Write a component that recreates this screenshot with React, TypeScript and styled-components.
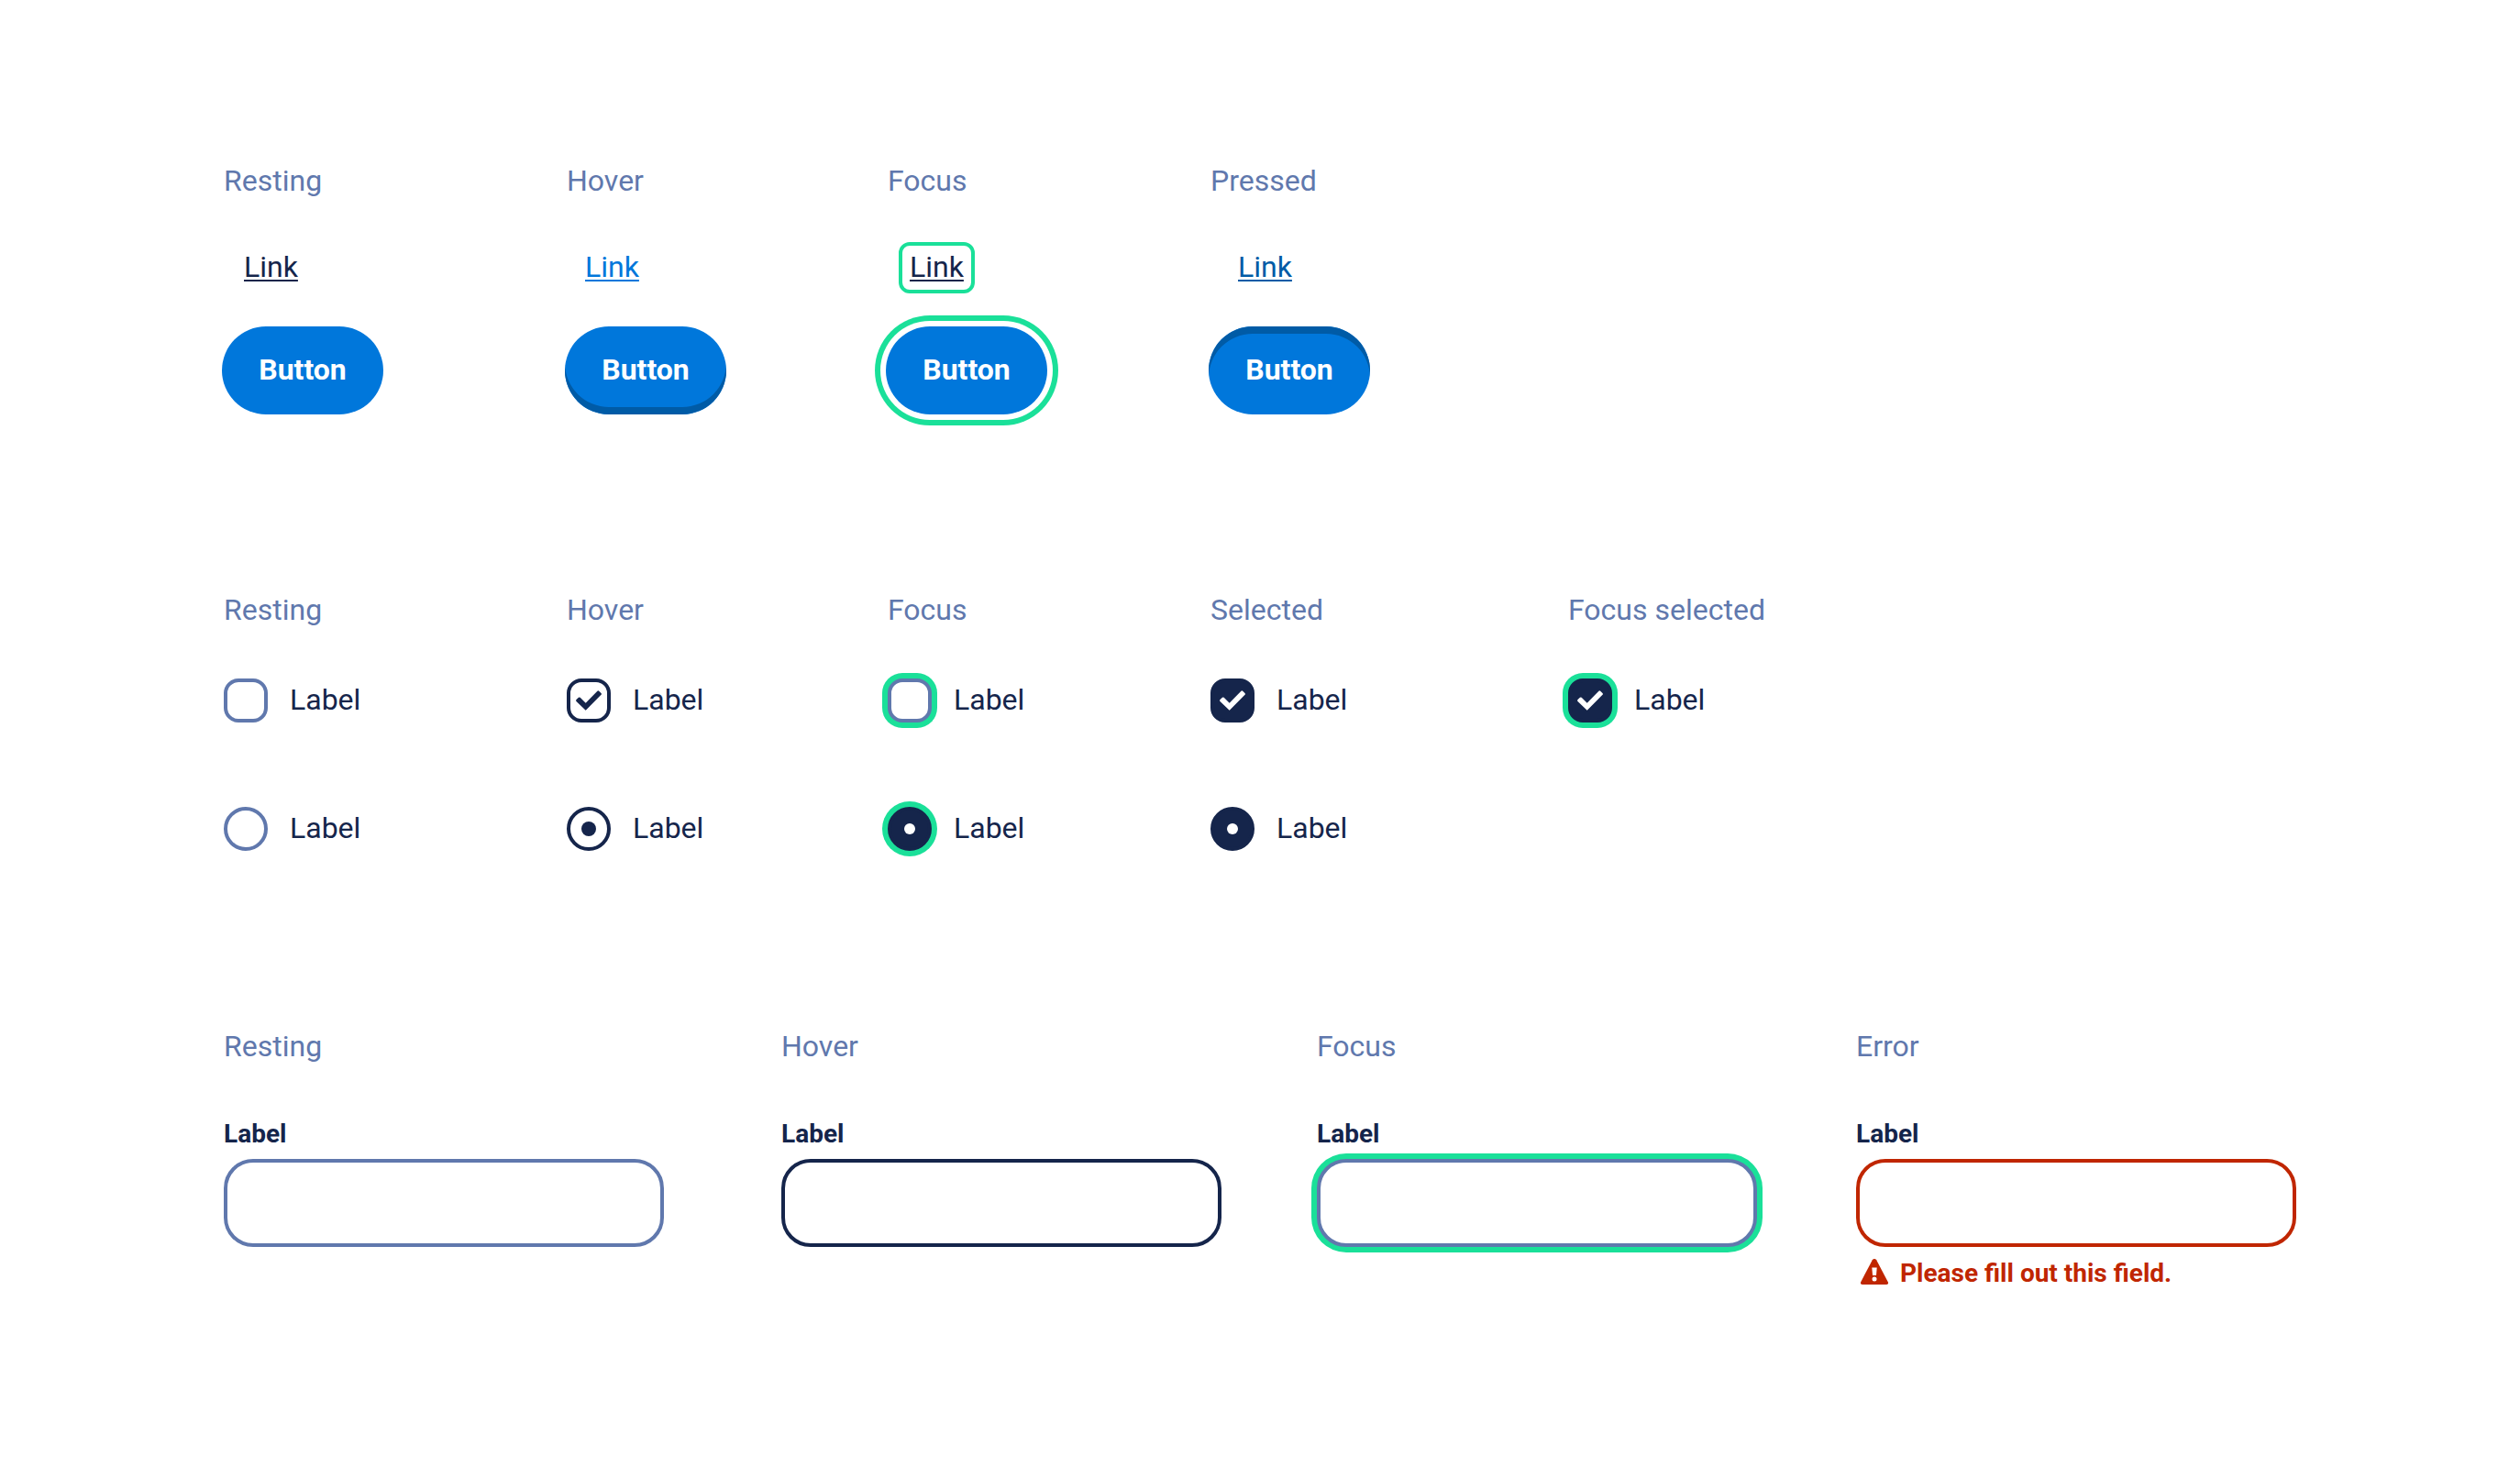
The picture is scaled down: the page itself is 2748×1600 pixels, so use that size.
import React, { useId } from "react";
import styled, { createGlobalStyle, css } from "styled-components";

const color = {
  navy: "#15254b",
  slate: "#6078ad",
  blue: "#0077db",
  deepBlue: "#005ba6",
  green: "#1ae099",
  red: "#c02600",
  white: "#ffffff",
};

type State = "resting" | "hover" | "focus" | "pressed" | "selected" | "focusSelected" | "error";

const GlobalStyle = createGlobalStyle`
  *, *::before, *::after { box-sizing: border-box; }
  body {
    margin: 0;
    background: ${color.white};
    color: ${color.navy};
    font-family: Roboto, "Liberation Sans", sans-serif;
    font-size: 32px;
    line-height: 40px;
  }
`;

const Page = styled.main`
  display: flex;
  flex-direction: column;
  padding: 176px 242px;
`;

const Group = styled.section<{ $after?: number }>`
  display: flex;
  flex-direction: column;
  margin-bottom: ${(p) => p.$after ?? 0}px;
`;

const Columns = styled.div<{ $tracks: string; $before?: number; $inset?: number }>`
  display: grid;
  grid-template-columns: ${(p) => p.$tracks};
  justify-items: start;
  align-items: start;
  margin-top: ${(p) => p.$before ?? 0}px;

  & > * {
    margin-left: ${(p) => p.$inset ?? 0}px;
  }
`;

const Heading = styled.h2`
  margin-top: 0;
  margin-bottom: 0;
  color: ${color.slate};
  font-size: 32px;
  font-weight: 400;
  line-height: 42px;
`;

const linkColor: Partial<Record<State, string>> = {
  hover: color.blue,
  pressed: color.deepBlue,
};

const TextLink = styled.a<{ $state: State }>`
  padding: 3px 8px 5px;
  border: 4px solid ${(p) => (p.$state === "focus" ? color.green : "transparent")};
  border-radius: 12px;
  color: ${(p) => linkColor[p.$state] ?? color.navy};
  text-decoration: underline;
  text-decoration-thickness: 2px;
  text-decoration-skip-ink: none;
  text-underline-offset: 3px;
`;

const buttonShadow: Partial<Record<State, string>> = {
  hover: `inset 0 -8px 0 ${color.deepBlue}`,
  focus: `0 0 0 6px ${color.white}, 0 0 0 12px ${color.green}`,
  pressed: `inset 0 8px 0 ${color.deepBlue}`,
};

const PillButton = styled.button<{ $state: State }>`
  height: 96px;
  min-width: 176px;
  padding: 0 32px 2px;
  border: 0;
  border-radius: 48px;
  background: ${color.blue};
  box-shadow: ${(p) => buttonShadow[p.$state] ?? "none"};
  color: ${color.white};
  font: 700 32px/40px Roboto, "Liberation Sans", sans-serif;
  cursor: pointer;
`;

const ChoiceLabel = styled.label`
  display: flex;
  align-items: center;
  gap: 24px;
  cursor: pointer;
`;

const ChoiceText = styled.span`
  padding-bottom: 2px;
`;

const Mark = styled.span`
  display: grid;
  width: 48px;
  height: 48px;
  & > * { grid-area: 1 / 1; }
`;

const filled = (s: State) => s === "selected" || s === "focusSelected";
const ringed = (s: State) => s === "focus" || s === "focusSelected";

const controlBase = css<{ $state: State }>`
  appearance: none;
  width: 48px;
  height: 48px;
  margin: 0;
  border: 4px solid
    ${(p) => (p.$state === "resting" || p.$state === "focus" ? color.slate : color.navy)};
  background: ${color.white};
  box-shadow: ${(p) => (ringed(p.$state) ? `0 0 0 6px ${color.green}` : "none")};
  cursor: pointer;
`;

const Checkbox = styled.input<{ $state: State }>`
  ${controlBase}
  border-radius: 16px;
  background: ${(p) => (filled(p.$state) ? color.navy : color.white)};
`;

const Radio = styled.input<{ $state: State }>`
  ${controlBase}
  display: grid;
  place-content: center;
  border-radius: 50%;

  &:checked {
    border-color: ${color.navy};
    background: ${(p) => (p.$state === "hover" ? color.white : color.navy)};
  }

  &:checked::before {
    content: "";
    width: ${(p) => (p.$state === "hover" ? 16 : 12)}px;
    height: ${(p) => (p.$state === "hover" ? 16 : 12)}px;
    border-radius: 50%;
    background: ${(p) => (p.$state === "hover" ? color.navy : color.white)};
  }
`;

const CheckSvg = styled.svg<{ $light: boolean }>`
  width: 48px;
  height: 48px;
  fill: ${(p) => (p.$light ? color.white : color.navy)};
  pointer-events: none;
`;

const Field = styled.div`
  display: flex;
  flex-direction: column;
  width: 100%;
  max-width: 480px;
`;

const FieldLabel = styled.label`
  margin-bottom: 6px;
  font-size: 28px;
  font-weight: 700;
  line-height: 42px;
`;

const fieldBorder: Partial<Record<State, string>> = {
  hover: color.navy,
  error: color.red,
};

const TextInput = styled.input<{ $state: State }>`
  width: 100%;
  height: 96px;
  padding: 0 28px;
  border: 4px solid ${(p) => fieldBorder[p.$state] ?? color.slate};
  border-radius: 32px;
  outline: 0;
  background: ${color.white};
  box-shadow: ${(p) => (p.$state === "focus" ? `0 0 0 6px ${color.green}` : "none")};
  color: ${color.navy};
  font: 400 32px/40px Roboto, "Liberation Sans", sans-serif;
`;

const ErrorMessage = styled.p`
  display: flex;
  align-items: center;
  gap: 12px;
  margin: 8px 0 0;
  padding-left: 4px;
  color: ${color.red};
  font-size: 28px;
  font-weight: 700;
  line-height: 42px;
`;

const WarningSvg = styled.svg`
  flex: none;
  width: 32px;
  height: 32px;
`;

const WarningIcon = () => (
  <WarningSvg viewBox="0 0 32 32" aria-hidden="true">
    <path
      d="M13.8 1.2 C14.8 -.4 17.2 -.4 18.2 1.2 L30.8 25.2 C31.5 26.7 30.8 28 29.2 28 H2.8 C1.2 28 .5 26.7 1.2 25.2 Z"
      fill={color.red}
    />
    <path d="M13.3 9.5 H18.7 L18 18 H14 Z" fill={color.white} />
    <circle cx="16" cy="22" r="2.5" fill={color.white} />
  </WarningSvg>
);

const CheckIcon = ({ light }: { light: boolean }) => (
  <CheckSvg viewBox="0 0 48 48" aria-hidden="true" $light={light}>
    <path d="M20.7 34.7 L10.5 24.9 Q9.7 24 10.5 23.1 L12.9 20.8 Q13.8 20 14.7 20.8 L20.7 26.7 L33.4 13.7 Q34.3 12.8 35.2 13.7 L37.5 16 Q38.4 16.9 37.5 17.8 Z" />
  </CheckSvg>
);

function CheckboxChoice({ state }: { state: State }) {
  const checked = state === "hover" || filled(state);
  return (
    <ChoiceLabel>
      <Mark>
        <Checkbox type="checkbox" $state={state} defaultChecked={checked} />
        {checked && <CheckIcon light={filled(state)} />}
      </Mark>
      <ChoiceText>Label</ChoiceText>
    </ChoiceLabel>
  );
}

function RadioChoice({ state }: { state: State }) {
  return (
    <ChoiceLabel>
      <Radio type="radio" name={`radio-${state}`} $state={state} defaultChecked={state !== "resting"} />
      <ChoiceText>Label</ChoiceText>
    </ChoiceLabel>
  );
}

function TextField({ state }: { state: State }) {
  const id = useId();
  const invalid = state === "error";
  return (
    <Field>
      <FieldLabel htmlFor={id}>Label</FieldLabel>
      <TextInput
        id={id}
        type="text"
        $state={state}
        aria-invalid={invalid}
        aria-describedby={invalid ? `${id}-error` : undefined}
      />
      {invalid && (
        <ErrorMessage id={`${id}-error`}>
          <WarningIcon />
          Please fill out this field.
        </ErrorMessage>
      )}
    </Field>
  );
}

const actionStates: State[] = ["resting", "hover", "focus", "pressed"];
const checkboxStates: State[] = ["resting", "hover", "focus", "selected", "focusSelected"];
const radioStates: State[] = ["resting", "hover", "focus", "selected"];
const fieldStates: State[] = ["resting", "hover", "focus", "error"];

const names: Record<State, string> = {
  resting: "Resting",
  hover: "Hover",
  focus: "Focus",
  pressed: "Pressed",
  selected: "Selected",
  focusSelected: "Focus selected",
  error: "Error",
};

const tracks = {
  controls: "374fr 350fr 352fr 390fr 798fr",
  links: "372fr 354fr 358fr 1180fr",
  fields: "608fr 584fr 588fr 484fr",
};

const Headings = ({ states, columns }: { states: State[]; columns: string }) => (
  <Columns $tracks={columns} $inset={2}>
    {states.map((s) => (
      <Heading key={s}>{names[s]}</Heading>
    ))}
  </Columns>
);

export default function App() {
  return (
    <>
      <GlobalStyle />
      <Page>
        <Group $after={192}>
          <Headings states={actionStates} columns={tracks.controls} />
          <Columns $tracks={tracks.links} $before={46} $inset={12}>
            {actionStates.map((s) => (
              <TextLink key={s} href="#" $state={s}>
                Link
              </TextLink>
            ))}
          </Columns>
          <Columns $tracks={tracks.controls} $before={36}>
            {actionStates.map((s) => (
              <PillButton key={s} type="button" $state={s}>
                Button
              </PillButton>
            ))}
          </Columns>
        </Group>

        <Group $after={192}>
          <Headings states={checkboxStates} columns={tracks.controls} />
          <Columns $tracks={tracks.controls} $before={54} $inset={2}>
            {checkboxStates.map((s) => (
              <CheckboxChoice key={s} state={s} />
            ))}
          </Columns>
          <Columns $tracks={tracks.controls} $before={92} $inset={2}>
            {radioStates.map((s) => (
              <RadioChoice key={s} state={s} />
            ))}
          </Columns>
        </Group>

        <Group>
          <Headings states={fieldStates} columns={tracks.fields} />
          <Columns $tracks={tracks.fields} $before={54} $inset={2}>
            {fieldStates.map((s) => (
              <TextField key={s} state={s} />
            ))}
          </Columns>
        </Group>
      </Page>
    </>
  );
}
